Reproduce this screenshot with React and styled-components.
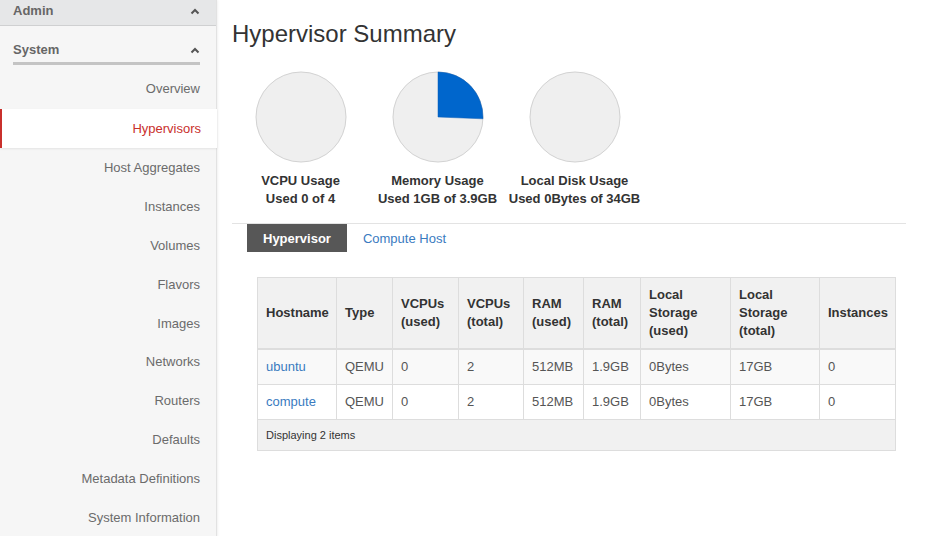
import React from 'react';
import styled, { createGlobalStyle } from 'styled-components';

const GlobalStyle = createGlobalStyle`
  body {
    margin: 0;
    background: #fff;
    font-family: "Liberation Sans", Arial, sans-serif;
    font-size: 13px;
    color: #333;
  }
`;

const navItems = [
  'Overview',
  'Hypervisors',
  'Host Aggregates',
  'Instances',
  'Volumes',
  'Flavors',
  'Images',
  'Networks',
  'Routers',
  'Defaults',
  'Metadata Definitions',
  'System Information',
];

const pies = [
  { title: 'VCPU Usage', text: 'Used 0 of 4', used: 0, total: 4 },
  { title: 'Memory Usage', text: 'Used 1GB of 3.9GB', used: 1, total: 3.9 },
  { title: 'Local Disk Usage', text: 'Used 0Bytes of 34GB', used: 0, total: 34 },
];

const columns = [
  { label: 'Hostname', width: 79 },
  { label: 'Type', width: 56 },
  { label: 'VCPUs (used)', width: 66 },
  { label: 'VCPUs (total)', width: 65 },
  { label: 'RAM (used)', width: 60 },
  { label: 'RAM (total)', width: 57 },
  { label: 'Local Storage (used)', width: 90 },
  { label: 'Local Storage (total)', width: 89 },
  { label: 'Instances', width: 76 },
];

const rows = [
  ['ubuntu', 'QEMU', '0', '2', '512MB', '1.9GB', '0Bytes', '17GB', '0'],
  ['compute', 'QEMU', '0', '2', '512MB', '1.9GB', '0Bytes', '17GB', '0'],
];

const Chevron = () => (
  <svg width="10" height="7" viewBox="0 0 10 7">
    <path d="M1.5 5.5 L5 2 L8.5 5.5" fill="none" stroke="#555" strokeWidth="2" />
  </svg>
);

const Pie = ({ used, total }) => {
  const r = 45;
  const c = 46;
  const frac = used / total;
  const angle = frac * 2 * Math.PI;
  const x = c + r * Math.sin(angle);
  const y = c - r * Math.cos(angle);
  const large = frac > 0.5 ? 1 : 0;
  return (
    <svg width="92" height="92" viewBox="0 0 92 92">
      <circle cx={c} cy={c} r={r} fill="#efefef" stroke="#d2d2d2" strokeWidth="1" />
      {frac > 0 && (
        <path
          d={`M${c} ${c} L${c} ${c - r} A${r} ${r} 0 ${large} 1 ${x} ${y} Z`}
          fill="#0066cc"
          stroke="#0a5db5"
          strokeWidth="0.5"
        />
      )}
    </svg>
  );
};

const App = () => (
  <Page>
    <GlobalStyle />
    <Sidebar>
      <PanelHeader>
        <span>Admin</span>
        <Chevron />
      </PanelHeader>
      <GroupHeader>
        <span>System</span>
        <Chevron />
      </GroupHeader>
      <NavList>
        {navItems.map((item) => (
          <NavItem key={item} active={item === 'Hypervisors'}>
            {item}
          </NavItem>
        ))}
      </NavList>
    </Sidebar>
    <Main>
      <Title>Hypervisor Summary</Title>
      <PieRow>
        {pies.map((p) => (
          <PieBlock key={p.title}>
            <Pie used={p.used} total={p.total} />
            <PieLabel>
              {p.title}
              <br />
              {p.text}
            </PieLabel>
          </PieBlock>
        ))}
      </PieRow>
      <Tabs>
        <Tab active>Hypervisor</Tab>
        <Tab>Compute Host</Tab>
      </Tabs>
      <TableWrap>
        <Table>
          <colgroup>
            {columns.map((col) => (
              <col key={col.label} style={{ width: col.width }} />
            ))}
          </colgroup>
          <thead>
            <tr>
              {columns.map((col) => (
                <Th key={col.label}>{col.label}</Th>
              ))}
            </tr>
          </thead>
          <tbody>
            {rows.map((row, i) => (
              <Tr key={row[0]} striped={i % 2 === 0}>
                {row.map((cell, j) => (
                  <Td key={j}>{j === 0 ? <Link>{cell}</Link> : cell}</Td>
                ))}
              </Tr>
            ))}
          </tbody>
          <tfoot>
            <tr>
              <Footer colSpan={columns.length}>Displaying 2 items</Footer>
            </tr>
          </tfoot>
        </Table>
      </TableWrap>
    </Main>
  </Page>
);

const Page = styled.div`
  display: flex;
  min-height: 536px;
`;

const Sidebar = styled.nav`
  width: 216px;
  flex-shrink: 0;
  background: #f6f6f6;
  border-right: 1px solid #e2e2e2;
  box-shadow: 1px 0 2px rgba(0, 0, 0, 0.06);
`;

const PanelHeader = styled.div`
  height: 22px;
  display: flex;
  align-items: flex-start;
  justify-content: space-between;
  padding: 3px 16px 0 13px;
  background: #e6e7e8;
  border-bottom: 1px solid #cfd0d1;
  font-weight: bold;
  font-size: 13px;
  line-height: 15px;
  color: #666;

  svg {
    margin-top: 5px;
  }
`;

const GroupHeader = styled.div`
  margin: 0 16px 0 13px;
  padding: 15px 0 3px;
  line-height: 18px;
  display: flex;
  align-items: center;
  justify-content: space-between;
  border-bottom: 3px solid #c4c4c4;
  font-weight: bold;
  font-size: 13px;
  color: #666;
`;

const NavList = styled.div`
  display: flex;
  flex-direction: column;
  padding-top: 4px;
`;

const NavItem = styled.div`
  height: 38.8px;
  display: flex;
  align-items: center;
  justify-content: flex-end;
  padding-right: 16px;
  font-size: 13px;
  color: ${(p) => (p.active ? '#c9302c' : '#6b6b6b')};
  background: ${(p) => (p.active ? '#fff' : 'transparent')};
  border-left: 2px solid ${(p) => (p.active ? '#c9302c' : 'transparent')};
  margin: ${(p) => (p.active ? '1px -1px 1px 0' : '0')};
  box-shadow: ${(p) => (p.active ? '0 1px 2px rgba(0,0,0,0.08)' : 'none')};
`;

const Main = styled.main`
  flex: 1;
  padding: 0 20px 0 15px;
`;

const Title = styled.h1`
  margin: 20px 0 0;
  font-size: 24px;
  font-weight: normal;
  line-height: 28px;
  color: #333;
`;

const PieRow = styled.div`
  display: flex;
  margin-top: 23px;
`;

const PieBlock = styled.div`
  width: 137px;
  display: flex;
  flex-direction: column;
  align-items: center;
`;

const PieLabel = styled.div`
  margin-top: 9px;
  text-align: center;
  font-weight: bold;
  font-size: 13px;
  line-height: 18px;
  color: #333;
`;

const Tabs = styled.div`
  display: flex;
  margin-top: 15px;
  padding-left: 15px;
  border-top: 1px solid #e3e3e3;
`;

const Tab = styled.div`
  height: 28px;
  display: flex;
  align-items: center;
  padding: 0 16px;
  font-size: 13px;
  font-weight: ${(p) => (p.active ? 'bold' : 'normal')};
  color: ${(p) => (p.active ? '#fff' : '#3a7bbf')};
  background: ${(p) => (p.active ? '#575757' : 'transparent')};
`;

const TableWrap = styled.div`
  padding: 25px 10px 0 25px;
`;

const Table = styled.table`
  width: 638px;
  table-layout: fixed;
  border-collapse: collapse;
  font-size: 13px;
`;

const Th = styled.th`
  text-align: left;
  vertical-align: middle;
  padding: 8px;
  line-height: 18px;
  font-weight: bold;
  color: #333;
  background: #f1f1f1;
  border: 1px solid #ddd;
  border-bottom: 2px solid #ddd;
`;

const Tr = styled.tr`
  background: ${(p) => (p.striped ? '#f9f9f9' : '#fff')};
`;

const Td = styled.td`
  padding: 8px;
  line-height: 18px;
  color: #555;
  border: 1px solid #ddd;
`;

const Link = styled.span`
  color: #3a7bbf;
`;

const Footer = styled.td`
  padding: 8px;
  height: 14px;
  line-height: 14px;
  font-size: 11px;
  color: #333;
  background: #f1f1f1;
  border: 1px solid #ddd;
`;

export default App;
